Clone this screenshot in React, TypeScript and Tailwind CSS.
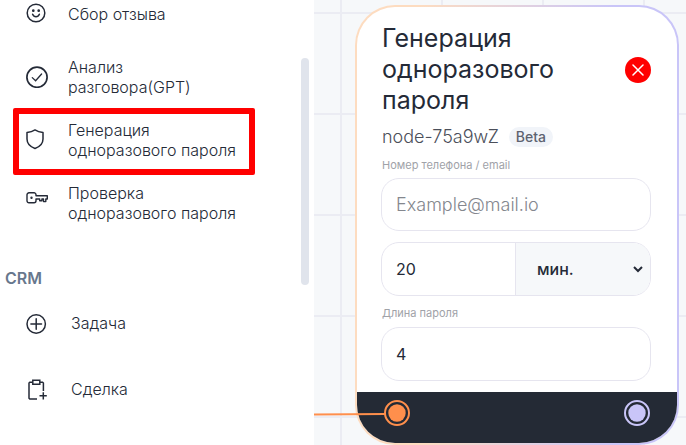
import { ReactNode, useState } from "react"

interface SidebarItem {
  title: string
  icon: ReactNode
  active?: boolean
}

const SmileIcon = () => (
  <svg width="22" height="22" viewBox="0 0 22 22" fill="none" stroke="#242a37" strokeWidth="1.5" strokeLinecap="round">
    <circle cx="10" cy="10" r="8.8" />
    <path d="M6.6 11.2c.7 1.7 1.9 2.6 3.4 2.6s2.7-.9 3.4-2.6" />
    <circle cx="7.3" cy="7.7" r=".6" fill="#242a37" />
    <circle cx="12.7" cy="7.7" r=".6" fill="#242a37" />
  </svg>
)

const CheckIcon = () => (
  <svg width="22" height="22" viewBox="0 0 22 22" fill="none" stroke="#242a37" strokeWidth="1.5" strokeLinecap="round">
    <circle cx="11" cy="11.2" r="10.1" strokeWidth="1.7" />
    <path d="M6.3 11.6l3.3 3.2 6-6.8" strokeWidth="1.3" />
  </svg>
)

const ShieldIcon = () => (
  <svg width="22" height="22" viewBox="0 0 22 22" fill="none" stroke="#242a37" strokeWidth="1.5" strokeLinejoin="round">
    <path d="M9 .9C6.8 2.3 4 3.2 1 3.6v6.5c0 4.6 3.4 7.8 8 9.4 4.6-1.6 8-4.8 8-9.4V3.6c-3-.4-5.8-1.3-8-2.7z" />
  </svg>
)

const KeyIcon = () => (
  <svg width="22" height="22" viewBox="0 0 22 22" fill="none" stroke="#242a37" strokeWidth="1.4" strokeLinejoin="round">
    <path d="M3 .8h5a2 2 0 0 1 2 2v1h11.3v3.2h-1.5v2.6h-2.3V7h-1.6v1.7h-2.2V7H10v1.8a2 2 0 0 1-2 2H3a2 2 0 0 1-2-2v-6a2 2 0 0 1 2-2z" />
    <circle cx="5.5" cy="5.8" r=".5" fill="#242a37" />
  </svg>
)

const PlusIcon = () => (
  <svg width="22" height="22" viewBox="0 0 22 22" fill="none" stroke="#242a37" strokeWidth="1.5" strokeLinecap="round">
    <circle cx="10.2" cy="12" r="9.2" />
    <path d="M4.9 12h10.6M10.2 6.7v10.6" />
  </svg>
)

const ClipboardIcon = () => (
  <svg width="22" height="22" viewBox="0 0 22 22" fill="none" stroke="#242a37" strokeWidth="1.5">
    <path d="M6.5 4.2H3.8l-.8.8v15.2l.8.8h7.2M14 4.2h2.6l.8.8v8" />
    <path d="M6.8 2.2h7v4h-7z" />
    <path d="M13.5 17.8h7.3M17.3 14.2v7.3" />
  </svg>
)

const actions: SidebarItem[] = [
  { title: "Сбор отзыва", icon: <SmileIcon /> },
  { title: "Анализ разговора(GPT)", icon: <CheckIcon /> },
  { title: "Генерация одноразового пароля", icon: <ShieldIcon />, active: true },
  { title: "Проверка одноразового пароля", icon: <KeyIcon /> },
]

const crm: SidebarItem[] = [
  { title: "Задача", icon: <PlusIcon /> },
  { title: "Сделка", icon: <ClipboardIcon /> },
]

function Sidebar() {
  return (
    <aside className="relative w-[314px] shrink-0 overflow-hidden bg-white text-base leading-5 font-light text-[#242a37]">
      {/* the list is scrolled a little, so its first row starts above the edge */}
      <ul className="-mt-[18px]">
        {actions.map((item) => (
          <li key={item.title} className="relative">
            <button className="flex h-[63px] w-full items-center gap-5 pr-[70px] pl-[26px] text-left">
              <span className="shrink-0">{item.icon}</span>
              <span>{item.title}</span>
            </button>
            {item.active && (
              <div className="pointer-events-none absolute top-0 right-[59px] -bottom-1 left-[13px] rounded-xs border-6 border-[#ff0000]" />
            )}
          </li>
        ))}
      </ul>
      <h2 className="mt-[34px] pl-[5px] font-semibold text-[#68778d]">CRM</h2>
      <ul className="mt-0.5">
        {crm.map((item) => (
          <li key={item.title}>
            <button className="flex h-[66px] w-full items-center gap-[23px] pl-[26px] text-left">
              <span className="shrink-0">{item.icon}</span>
              <span>{item.title}</span>
            </button>
          </li>
        ))}
      </ul>
      <div className="absolute top-[58px] right-[5px] h-[227px] w-2 rounded-full bg-[#e0e4ec]" />
    </aside>
  )
}

function Handle({ color }: { color: string }) {
  return (
    <svg width="26" height="26" viewBox="0 0 26 26">
      <circle cx="13" cy="13" r="12" fill="#242a35" stroke={color} strokeWidth="2" />
      <circle cx="13" cy="13" r="8.7" fill={color} />
    </svg>
  )
}

function PasswordNode() {
  const [contact, setContact] = useState("")
  const [time, setTime] = useState("20")
  const [unit, setUnit] = useState("min")
  const [size, setSize] = useState("4")

  return (
    <div className="relative rounded-[40px] bg-linear-to-r from-[#fddcc0] from-20% to-[#c9c5f8] to-80% p-0.5">
      <div className="overflow-hidden rounded-[38px] bg-white">
        <div className="pt-4 pr-[26px] pb-[11px] pl-6">
          <div className="flex items-center justify-between pl-px">
            <h1 className="w-[200px] text-[25px] leading-[31px] text-[#242a37]">Генерация одноразового пароля</h1>
            <button aria-label="Удалить" className="flex size-[26px] items-center justify-center rounded-full bg-[#ff0000]">
              <svg width="12" height="12" viewBox="0 0 12 12" stroke="#fff" strokeWidth="1.5" strokeLinecap="round">
                <path d="M1 1l10 10M11 1L1 11" />
              </svg>
            </button>
          </div>
          <div className="mt-[9px] flex items-center gap-2.5 pl-px">
            <span className="text-lg leading-6 font-light text-[#4b4f5a]">node-75a9wZ</span>
            <span className="rounded-full bg-[#f1f4f9] px-[7px] text-sm leading-5 font-medium text-[#5d6270]">Beta</span>
          </div>
          <label htmlFor="contact" className="mt-2 block pl-px text-[11px] leading-4 text-[#a0a2a8]">
            Номер телефона / email
          </label>
          <input
            id="contact"
            type="text"
            value={contact}
            onChange={(e) => setContact(e.target.value)}
            placeholder="Example@mail.io"
            className="mt-[5px] block h-[53px] w-full rounded-[18px] border border-[#e6e5ef] px-3.5 text-lg font-light text-[#242a37] placeholder:text-[#84878e]"
          />
          <div className="mt-[11px] flex h-[54px] overflow-hidden rounded-[18px] border border-[#e6e5ef]">
            <input
              type="text"
              aria-label="Время"
              value={time}
              onChange={(e) => setTime(e.target.value)}
              className="w-0 flex-1 px-3.5 text-base text-[#242a37]"
            />
            <select
              aria-label="Единица времени"
              value={unit}
              onChange={(e) => setUnit(e.target.value)}
              className="w-[135px] border-r-4 border-l border-[#e6e5ef] border-r-[#f6f8fa] bg-[#f6f8fa] pl-[17px] text-base font-medium text-[#242a37]"
            >
              <option value="min">мин.</option>
              <option value="sec">сек.</option>
            </select>
          </div>
          <label htmlFor="size" className="mt-[9px] block pl-px text-[11px] leading-4 text-[#a0a2a8]">
            Длина пароля
          </label>
          <input
            id="size"
            type="text"
            value={size}
            onChange={(e) => setSize(e.target.value)}
            className="mt-1.5 block h-[54px] w-full rounded-[18px] border border-[#e6e5ef] px-3.5 text-base text-[#242a37]"
          />
        </div>
        <div className="flex h-[51px] items-start justify-between bg-[#242a35] px-[27px] pt-2">
          <Handle color="#ff8f4c" />
          <Handle color="#c9c5f8" />
        </div>
      </div>
      <svg className="absolute bottom-[29px] -left-[41px]" width="71" height="4" viewBox="0 0 71 4" fill="none">
        <path d="M0 2.5C20 2.5 40 2 71 2" stroke="#ff8f4c" strokeWidth="2" />
      </svg>
    </div>
  )
}

function App() {
  return (
    <div className="flex min-h-screen bg-white font-['Inter','Liberation_Sans',sans-serif]">
      <Sidebar />
      <main className="min-w-0 flex-1 bg-[#f6f8fa] bg-[linear-gradient(#ebecf3_2px,transparent_2px),linear-gradient(90deg,#ebecf3_2px,transparent_2px)] bg-size-[101px_101px] bg-position-[26px_12px] pt-[5px] pr-[7px] pl-[41px]">
        <PasswordNode />
      </main>
    </div>
  )
}

export default App
